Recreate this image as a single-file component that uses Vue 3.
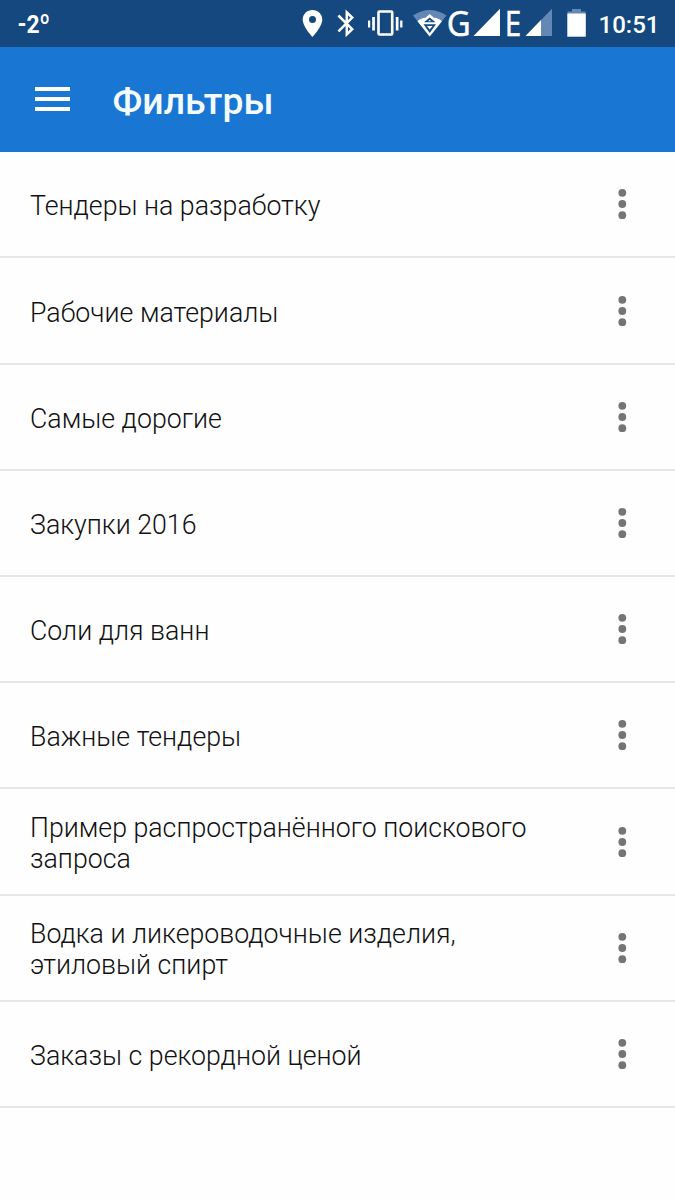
<script setup>
const filters = [
  'Тендеры на разработку',
  'Рабочие материалы',
  'Самые дорогие',
  'Закупки 2016',
  'Соли для ванн',
  'Важные тендеры',
  'Пример распространённого поискового запроса',
  'Водка и ликероводочные изделия, этиловый спирт',
  'Заказы с рекордной ценой'
]
</script>

<template>
  <div class="screen">
    <div class="status">
      <svg class="temp" width="60" height="47" viewBox="0 0 60 47">
        <text x="17.5" y="33" textLength="32.5" lengthAdjust="spacingAndGlyphs">-2º</text>
      </svg>
      <div class="indicators">
        <!-- location -->
        <svg width="30" height="47" viewBox="298 0 30 47">
          <path fill="#fff" fill-rule="evenodd" d="M312.5 10c-5.5 0-9.8 4.2-9.8 9.6 0 7.2 9.8 17.4 9.8 17.4s9.8-10.2 9.8-17.4c0-5.4-4.3-9.6-9.8-9.6zm0 6.1a3.5 3.5 0 1 1 0 7 3.5 3.5 0 0 1 0-7z" />
        </svg>
        <!-- bluetooth -->
        <svg width="34" height="47" viewBox="328 0 34 47">
          <path fill="none" stroke="#fff" stroke-width="2.5" d="M338.4 15.5 352.2 29.2 346.8 34.3V12.5L352.2 17.6 338.4 31.3" />
        </svg>
        <!-- vibrate -->
        <svg width="46" height="47" viewBox="362 0 46 47">
          <rect x="378.5" y="11.5" width="13.7" height="23" rx="1" fill="none" stroke="#fff" stroke-width="2.6" />
          <path fill="#fff" d="M368 20.5h2.200v7H368zM372.200 17h2.700v13.600h-2.700zM395.800 17h2.700v13.600h-2.700zM400.200 20.500h2.200v7h-2.200z" />
        </svg>
        <!-- wifi -->
        <svg width="40" height="47" viewBox="408 0 40 47">
          <path fill="#6488b5" d="M413 15.500Q429.700 4.500 446.500 15.500L429.700 36.500z" />
          <path fill="#fff" d="M417.500 21.200Q421 17.800 425.500 17.700L429.700 14 434 17.700Q438.500 17.800 442 21.200L429.700 36.500z" />
          <path fill="#164a83" d="M424 22.300 429.700 17.500 435.500 22.300zM423.500 24.300H436L429.700 33z" />
          <path fill="#fff" d="M428.200 21.200 429.700 19.800 431.200 21.200zM427 26h5.500L429.700 29.500z" />
        </svg>
        <svg class="net" width="24" height="47" viewBox="448 0 24 47">
          <text x="446.800" y="36" textLength="24" lengthAdjust="spacingAndGlyphs">G</text>
        </svg>
        <svg width="32" height="47" viewBox="472 0 32 47">
          <path fill="#fff" d="M500 8.700V36h-26.500z" />
        </svg>
        <svg class="net" width="18" height="47" viewBox="504 0 18 47">
          <text x="504.800" y="36" textLength="16.500" lengthAdjust="spacingAndGlyphs">E</text>
        </svg>
        <svg width="36" height="47" viewBox="522 0 36 47">
          <path fill="#6488b5" d="M552 8.700V36h-26.500z" />
          <path fill="#fff" d="M541 20V36h-15.500z" />
        </svg>
        <!-- battery -->
        <svg width="34" height="47" viewBox="558 0 34 47">
          <path fill="#6488b5" d="M572 9h9v2.500h4.500V14h-18v-2.500h4.500z" />
          <path fill="#fff" d="M567.300 13.500h18.500v23.200h-18.500z" />
        </svg>
        <svg class="clock" width="83" height="47" viewBox="592 0 83 47">
          <text x="598.500" y="32.500" textLength="61" lengthAdjust="spacingAndGlyphs">10:51</text>
        </svg>
      </div>
    </div>
    <header class="bar">
      <div class="burger"><i></i><i></i><i></i></div>
      <h1>Фильтры</h1>
    </header>
    <ul class="list">
      <li v-for="name in filters" :key="name">
        <span class="name">{{ name }}</span>
        <svg class="more" width="10" height="32" viewBox="0 0 10 32" fill="#747474">
          <circle cx="5.300" cy="4.800" r="3.900" />
          <circle cx="5.300" cy="16" r="3.900" />
          <circle cx="5.300" cy="27.200" r="3.900" />
        </svg>
      </li>
    </ul>
  </div>
</template>

<style>
body {
  margin: 0;
  background: #fefefe;
}
</style>

<style scoped>
.screen {
  width: 675px;
  height: 1200px;
  overflow: hidden;
  background: #fefefe;
  font-family: Roboto, "Noto Sans", sans-serif;
}
.status {
  height: 47px;
  background: #14487f;
  display: flex;
  justify-content: space-between;
}
.indicators {
  display: flex;
}
svg {
  display: block;
  flex: none;
  overflow: visible;
}
.temp text {
  font: 700 26.5px Roboto, sans-serif;
  fill: #fff;
}
.net text {
  font: 400 34.5px "Noto Sans", sans-serif;
  fill: #fff;
  stroke: #fff;
  stroke-width: 0.4px;
}
.clock text {
  font: 500 23.5px Roboto, sans-serif;
  fill: #fff;
}
.bar {
  height: 105px;
  background: #1976d3;
  display: flex;
  align-items: center;
  box-sizing: border-box;
  padding-left: 35px;
}
.burger {
  width: 35px;
  display: flex;
  flex-direction: column;
  gap: 6px;
  margin-bottom: 2px;
}
.burger i {
  height: 4px;
  background: #fff;
}
h1 {
  margin: 2px 0 0 42.5px;
  font-size: 37.4px;
  line-height: 44px;
  font-weight: 500;
  color: #f4fbff;
}
.list {
  margin: 0;
  padding: 0.3px 0 0;
  list-style: none;
}
li {
  height: 106.2px;
  box-sizing: border-box;
  border-bottom: 2px solid #e6e6e6;
  padding: 0 48px 0 30px;
  display: flex;
  align-items: center;
  justify-content: space-between;
}
.name {
  width: 510px;
  padding-top: 5px;
  font-size: 26.73px;
  line-height: 31px;
  font-weight: 300;
  color: #111;
}
</style>
